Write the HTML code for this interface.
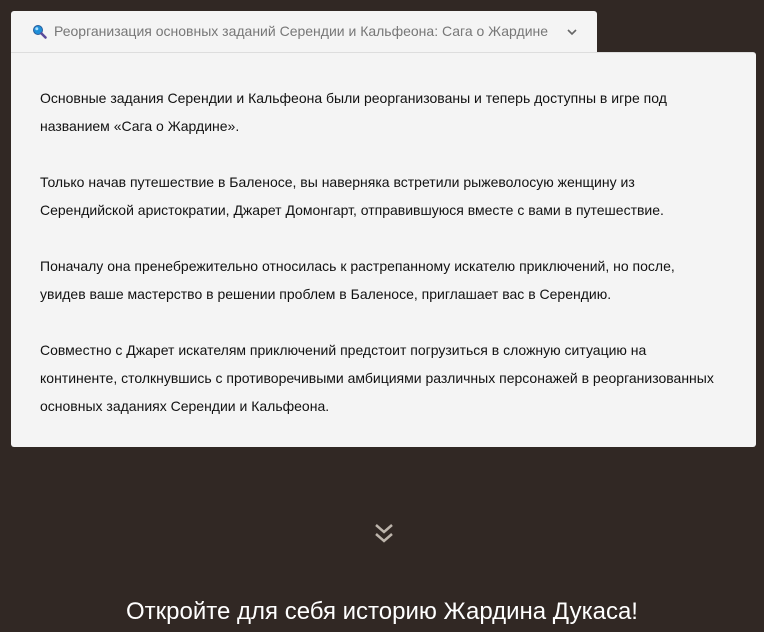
<!DOCTYPE html>
<html><head><meta charset="utf-8"><style>
body{margin:0;width:764px;height:632px;background:#312824;font-family:"Liberation Sans",sans-serif;overflow:hidden;position:relative}
.tab{position:absolute;left:11px;top:11px;width:586px;height:41px;background:#f4f4f4;border-radius:3px 3px 0 0;color:#777;font-size:14px;line-height:41px}
.tab .t{position:absolute;left:43px;top:0}
.panel{position:absolute;left:11px;top:52px;width:745px;height:395px;background:#f4f4f4;border-radius:0 3px 3px 3px;border-top:1px solid #ddd;box-sizing:border-box}
.panel p{margin:0 0 28px 0;font-size:14px;line-height:28px;color:#111;white-space:nowrap}
.inner{position:absolute;left:29px;top:31px;width:710px}
h2{position:absolute;left:0;width:764px;top:598px;margin:0;text-align:center;color:#fff;font-weight:normal;font-size:24px}
</style></head><body>
<div class="tab">
<svg style="position:absolute;left:21px;top:13px" width="15" height="15" viewBox="0 0 15 15"><circle cx="6" cy="6" r="4.5" fill="#1e8fd8" stroke="#2a5c9a" stroke-width="1"/><circle cx="4.8" cy="4.8" r="1.5" fill="#aee0ff"/><line x1="9.5" y1="9.5" x2="13.5" y2="13.5" stroke="#5a4a9a" stroke-width="2.5" stroke-linecap="round"/></svg>
<span class="t">Реорганизация основных заданий Серендии и Кальфеона: Сага о Жардине</span>
<svg style="position:absolute;left:556px;top:18px" width="10" height="7" viewBox="0 0 10 7"><path d="M1 1l4 4 4-4" fill="none" stroke="#666" stroke-width="1.6"/></svg>
</div>
<div class="panel"><div class="inner">
<p>Основные задания Серендии и Кальфеона были реорганизованы и теперь доступны в игре под<br>названием «Сага о Жардине».</p>
<p>Только начав путешествие в Баленосе, вы наверняка встретили рыжеволосую женщину из<br>Серендийской аристократии, Джарет Домонгарт, отправившуюся вместе с вами в путешествие.</p>
<p>Поначалу она пренебрежительно относилась к растрепанному искателю приключений, но после,<br>увидев ваше мастерство в решении проблем в Баленосе, приглашает вас в Серендию.</p>
<p>Совместно с Джарет искателям приключений предстоит погрузиться в сложную ситуацию на<br>континенте, столкнувшись с противоречивыми амбициями различных персонажей в реорганизованных<br>основных заданиях Серендии и Кальфеона.</p>
</div></div>
<svg style="position:absolute;left:374px;top:523px" width="20" height="22" viewBox="0 0 20 22"><path d="M2 2l8 7 8-7M2 11l8 7 8-7" fill="none" stroke="#bdb5ac" stroke-width="2.5"/></svg>
<h2>Откройте для себя историю Жардина Дукаса!</h2>
</body></html>
